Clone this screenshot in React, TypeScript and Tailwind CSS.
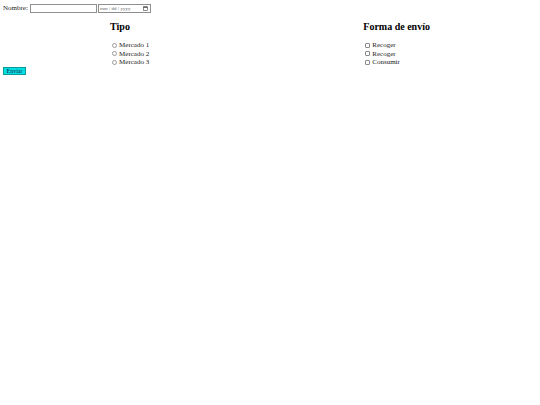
export default function App() {
  return (
    <div className="min-h-screen bg-white p-[3px] font-['Liberation_Serif',serif] text-[7px] leading-[8.5px] text-[#222]">
      <form onSubmit={(e) => e.preventDefault()}>
        <div className="flex items-center pt-[1px]">
          <label htmlFor="nombre" className="mr-[2px]">Nombre:</label>
          <input
            id="nombre"
            type="text"
            className="h-[9px] w-[67px] border border-[#8f8f8f] bg-white px-[1px] text-[6px] outline-none"
          />
          <div className="ml-[1px] flex h-[9px] w-[53px] items-center justify-between border border-[#8f8f8f] bg-white px-[1px] text-[5px] leading-[7px] text-[#666]">
            <span>mm / dd / yyyy</span>
            {/* calendar glyph */}
            <svg width="5" height="5" viewBox="0 0 10 10" className="mr-[1px]">
              <rect x="1" y="1.5" width="8" height="7.5" fill="none" stroke="#444" strokeWidth="1.2" />
              <rect x="1" y="1.5" width="8" height="2" fill="#444" />
            </svg>
          </div>
        </div>

        <div className="flex justify-around">
          <div>
            <h3 className="mt-[8px] mb-[9px] text-[10px] font-bold leading-[11px] text-black">Tipo</h3>
            <ul className="ml-[2px] list-none">
              {["Mercado 1", "Mercado 2", "Mercado 3"].map((m) => (
                <li key={m} className="flex h-[8.5px] items-center gap-[2px]">
                  <span className="h-[5px] w-[5px] rounded-full border border-[#9a9a9a] bg-white" />
                  <span>{m}</span>
                </li>
              ))}
            </ul>
          </div>
          <div>
            <h3 className="mt-[8px] mb-[9px] text-[10px] font-bold leading-[11px] text-black">Forma de envío</h3>
            <ul className="ml-[2px] list-none">
              {["Recoger", "Recoger", "Consumir"].map((f, i) => (
                <li key={i} className="flex h-[8.5px] items-center gap-[2px]">
                  <span className="h-[5px] w-[5px] rounded-[1px] border border-[#8a8a8a] bg-white" />
                  <span>{f}</span>
                </li>
              ))}
            </ul>
          </div>
        </div>

        <button
          type="submit"
          className="mt-[0px] flex h-[8px] w-[23px] items-center justify-center border border-[#0a9a9a] bg-[#00e0e0] text-[6px] leading-[6px] text-[#225]"
        >
          Enviar
        </button>
      </form>
    </div>
  );
}
